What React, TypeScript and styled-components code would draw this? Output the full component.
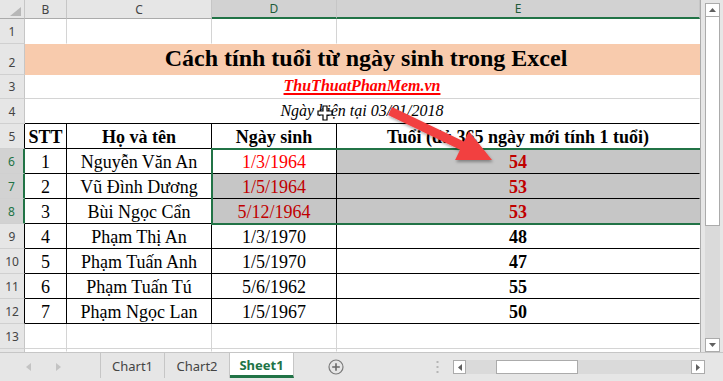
import styled, { createGlobalStyle } from "styled-components";

const GREEN = "#217346";
const GRID = "#d4d4d4";
const EDGE = "#ababab";

const GlobalStyle = createGlobalStyle`
  html, body {
    margin: 0;
    padding: 0;
    background: #fff;
    overflow: hidden;
  }
`;

const Window = styled.div`
  width: 723px;
  height: 381px;
  display: flex;
  flex-direction: column;
  background: #e6e6e6;
  overflow: hidden;
`;

const Main = styled.div`
  display: flex;
  height: 353px;
  box-sizing: border-box;
  border-bottom: 1px solid #c6c6c6;
`;

const Sheet = styled.div`
  position: relative;
  display: grid;
  grid-template-columns: 25px 42px 145px 125px 363px;
  grid-template-rows: 19px 25px 31px 24px repeat(10, 25px) 3px;
  border-right: 1px solid ${EDGE};
  background: #fff;
  overflow: hidden;
`;

const Corner = styled.div`
  display: flex;
  align-items: flex-end;
  justify-content: flex-end;
  padding: 0 3px 2px 0;
  box-sizing: border-box;
  background: #e6e6e6;
  border-right: 1px solid #c6c6c6;
  border-bottom: 1px solid ${EDGE};
`;

const ColHead = styled.div<{ $sel?: boolean }>`
  display: flex;
  align-items: center;
  justify-content: center;
  box-sizing: border-box;
  background: ${p => (p.$sel ? "#d2d2d2" : "#e6e6e6")};
  color: ${p => (p.$sel ? "#1e5b38" : "#444")};
  border-right: 1px solid #c6c6c6;
  border-bottom: ${p => (p.$sel ? `2px solid ${GREEN}` : `1px solid ${EDGE}`)};
  font: 12px "Noto Sans", "Open Sans", sans-serif;
`;

const RowHead = styled.div<{ $sel?: boolean; $edge?: boolean }>`
  display: flex;
  align-items: flex-end;
  justify-content: center;
  box-sizing: border-box;
  padding-bottom: 3px;
  background: ${p => (p.$sel ? "#d2d2d2" : "#e6e6e6")};
  color: ${p => (p.$sel ? GREEN : "#444")};
  border-right: ${p =>
    p.$sel ? `2px solid ${GREEN}` : `1px solid ${p.$edge ? "#000" : "#c6c6c6"}`};
  border-bottom: 1px solid #d0d0d0;
  font: 12px/16px "Noto Sans", "Open Sans", sans-serif;
`;

type Line = "grid" | "black" | "none";
const lineColor = (l: Line) => (l === "black" ? "#000" : l === "grid" ? GRID : "transparent");

const Cell = styled.div<{
  $span?: number;
  $bg?: string;
  $r?: Line;
  $b?: Line;
  $color?: string;
  $bold?: boolean;
  $pad?: number;
}>`
  grid-column: span ${p => p.$span ?? 1};
  display: flex;
  align-items: flex-end;
  justify-content: center;
  box-sizing: border-box;
  padding-bottom: ${p => p.$pad ?? 1}px;
  background: ${p => p.$bg ?? "#fff"};
  border-right: 1px solid ${p => lineColor(p.$r ?? "grid")};
  border-bottom: 1px solid ${p => lineColor(p.$b ?? "grid")};
  color: ${p => p.$color ?? "#000"};
  font-family: "Liberation Serif", "Times New Roman", serif;
  font-size: 18px;
  font-weight: ${p => (p.$bold ? 700 : 400)};
  line-height: 20px;
  white-space: nowrap;
`;

const Title = styled.span`
  font-size: 24px;
  line-height: 27px;
  font-weight: 700;
  margin-left: 8px;
`;

const SiteLink = styled.span`
  color: #ff0000;
  font-size: 16px;
  font-weight: 700;
  font-style: italic;
  text-decoration: underline;
  text-decoration-thickness: 2px;
  text-underline-offset: 2px;
`;

const DateNote = styled.span`
  font-size: 16px;
  font-style: italic;
`;

const Selection = styled.div`
  position: absolute;
  left: 211px;
  top: 148px;
  width: 490px;
  height: 77px;
  box-sizing: border-box;
  border: 2px solid ${GREEN};
  border-right: none;
  pointer-events: none;
`;

const CursorMark = styled.svg`
  position: absolute;
  left: 317px;
  top: 105px;
`;

const Arrow = styled.svg`
  position: absolute;
  left: 380px;
  top: 100px;
  overflow: visible;
`;

const VScroll = styled.div`
  width: 22px;
  box-sizing: border-box;
  padding: 3px 3px 0 4px;
  display: flex;
  flex-direction: column;
  background: #e6e6e6;
`;

const ScrollBtn = styled.div<{ $w?: number }>`
  height: 14px;
  width: ${p => (p.$w ? `${p.$w}px` : "auto")};
  flex: none;
  box-sizing: border-box;
  display: flex;
  align-items: center;
  justify-content: center;
  background: #fff;
  border: 1px solid ${EDGE};
`;

const VThumb = styled.div`
  height: 209px;
  background: #fff;
  border: 1px solid ${EDGE};
  border-top: none;
  box-sizing: border-box;
`;

const VTrack = styled.div`
  flex: 1;
  background: #dadada;
`;

const TabBar = styled.div`
  flex: 1;
  display: flex;
  align-items: center;
  background: #e6e6e6;
`;

const NavArrows = styled.div`
  width: 100px;
  box-sizing: border-box;
  display: flex;
  align-items: center;
  gap: 23px;
  padding-left: 26px;
`;

const Tabs = styled.div`
  align-self: flex-start;
  display: flex;
  height: 25px;
  border-left: 1px solid #c6c6c6;
`;

const Tab = styled.div<{ $w: number; $active?: boolean }>`
  width: ${p => p.$w}px;
  box-sizing: border-box;
  display: flex;
  align-items: center;
  justify-content: center;
  border-right: 1px solid #c6c6c6;
  border-bottom: ${p => (p.$active ? `3px solid ${GREEN}` : "none")};
  background: ${p => (p.$active ? "#fff" : "transparent")};
  color: ${p => (p.$active ? GREEN : "#444")};
  font: ${p => (p.$active ? 700 : 400)} 13px "Noto Sans", "Open Sans", sans-serif;
  padding-top: ${p => (p.$active ? 2 : 0)}px;
`;

const AddSheet = styled.svg`
  margin-left: 34px;
  flex: none;
`;

const Dots = styled.svg`
  margin-left: 92px;
  flex: none;
`;

const HScroll = styled.div`
  margin-left: 14px;
  width: 252px;
  height: 14px;
  display: flex;
`;

const HTrack = styled.div`
  flex: 1;
  background: #dadada;
  display: flex;
`;

const HThumb = styled.div`
  margin-left: 30px;
  width: 82px;
  background: #fff;
  border: 1px solid ${EDGE};
  box-sizing: border-box;
`;

const Tri = ({ dir, color = "#606060" }: { dir: "up" | "down" | "left" | "right"; color?: string }) => {
  const pts = {
    up: "0,4 7,4 3.5,0",
    down: "0,0 7,0 3.5,4",
    left: "4,0 4,7 0,3.5",
    right: "0,0 0,7 4,3.5",
  }[dir];
  const vertical = dir === "up" || dir === "down";
  return (
    <svg width={vertical ? 7 : 4} height={vertical ? 4 : 7}>
      <polygon points={pts} fill={color} />
    </svg>
  );
};

const people = [
  { stt: 1, name: "Nguyễn Văn An", dob: "1/3/1964", age: 54 },
  { stt: 2, name: "Vũ Đình Dương", dob: "1/5/1964", age: 53 },
  { stt: 3, name: "Bùi Ngọc Cẩn", dob: "5/12/1964", age: 53 },
  { stt: 4, name: "Phạm Thị An", dob: "1/3/1970", age: 48 },
  { stt: 5, name: "Phạm Tuấn Anh", dob: "1/5/1970", age: 47 },
  { stt: 6, name: "Phạm Tuấn Tú", dob: "5/6/1962", age: 55 },
  { stt: 7, name: "Phạm Ngọc Lan", dob: "1/5/1967", age: 50 },
];

const SEL_BG = "#c6c6c6";
const DARK_RED = "#c00000";

const App = () => {
  return (
    <Window>
      <GlobalStyle />
      <Main>
        <Sheet>
          <Corner>
            <svg width="11" height="9">
              <polygon points="11,0 11,9 0,9" fill="#b7b7b7" />
            </svg>
          </Corner>
          <ColHead>B</ColHead>
          <ColHead>C</ColHead>
          <ColHead $sel>D</ColHead>
          <ColHead $sel>E</ColHead>

          <RowHead>1</RowHead>
          <Cell $b="none" />
          <Cell $b="none" />
          <Cell $b="none" />
          <Cell $b="none" $r="none" />

          <RowHead>2</RowHead>
          <Cell $span={4} $bg="#f8cbad" $r="none" $b="none" $pad={2}>
            <Title>Cách tính tuổi từ ngày sinh trong Excel</Title>
          </Cell>

          <RowHead>3</RowHead>
          <Cell $span={4} $r="none" $pad={2}>
            <SiteLink>ThuThuatPhanMem.vn</SiteLink>
          </Cell>

          <RowHead>4</RowHead>
          <Cell $span={4} $r="none" $b="black" $pad={2}>
            <DateNote>Ngày hiện tại 03/01/2018</DateNote>
          </Cell>

          <RowHead $edge>5</RowHead>
          <Cell $r="black" $b="black" $bold>STT</Cell>
          <Cell $r="black" $b="black" $bold>Họ và tên</Cell>
          <Cell $r="black" $b="black" $bold>Ngày sinh</Cell>
          <Cell $r="none" $b="black" $bold>Tuổi (đủ 365 ngày mới tính 1 tuổi)</Cell>

          {people.map((p, i) => {
            const sel = i < 3;
            return [
              <RowHead key={`h${i}`} $sel={sel} $edge>
                {i + 6}
              </RowHead>,
              <Cell key={`a${i}`} $r="black" $b="black">
                {p.stt}
              </Cell>,
              <Cell key={`b${i}`} $r="black" $b="black">
                {p.name}
              </Cell>,
              <Cell
                key={`c${i}`}
                $r="black"
                $b="black"
                $bg={sel && i > 0 ? SEL_BG : "#fff"}
                $color={i === 0 ? "#ff0000" : sel ? DARK_RED : "#000"}
              >
                {p.dob}
              </Cell>,
              <Cell
                key={`d${i}`}
                $r="none"
                $b="black"
                $bold
                $bg={sel ? SEL_BG : "#fff"}
                $color={sel ? DARK_RED : "#000"}
              >
                {p.age}
              </Cell>,
            ];
          })}

          <RowHead>13</RowHead>
          <Cell />
          <Cell />
          <Cell />
          <Cell $r="none" />

          <RowHead />
          <Cell $b="none" />
          <Cell $b="none" />
          <Cell $b="none" />
          <Cell $b="none" $r="none" />

          <Selection />

          <CursorMark width="16" height="16" viewBox="-1 -1 16 16">
            <path
              d="M5 0 H9 V5 H14 V9 H9 V14 H5 V9 H0 V5 H5 Z"
              fill="#fff"
              stroke="#000"
              strokeWidth="1.2"
            />
          </CursorMark>

          <Arrow width="125" height="70" viewBox="0 0 125 70">
            <defs>
              <filter id="arrowShadow" x="-20%" y="-20%" width="150%" height="160%">
                <feDropShadow dx="1" dy="2" stdDeviation="1.6" floodColor="#000" floodOpacity="0.35" />
              </filter>
            </defs>
            <polygon
              points="11.95,6.95 83.95,41.55 88.9,31.2 112,60 75.1,60 80.05,49.65 8.05,15.05"
              fill="#f2403f"
              filter="url(#arrowShadow)"
            />
          </Arrow>
        </Sheet>

        <VScroll>
          <ScrollBtn>
            <Tri dir="up" />
          </ScrollBtn>
          <VThumb />
          <VTrack />
          <ScrollBtn>
            <Tri dir="down" />
          </ScrollBtn>
        </VScroll>
      </Main>

      <TabBar>
        <NavArrows>
          <svg width="6" height="8">
            <polygon points="5,0 5,8 0,4" fill="#c3c3c3" />
          </svg>
          <svg width="6" height="8">
            <polygon points="1,0 1,8 6,4" fill="#c3c3c3" />
          </svg>
        </NavArrows>
        <Tabs>
          <Tab $w={64}>Chart1</Tab>
          <Tab $w={65}>Chart2</Tab>
          <Tab $w={64} $active>
            Sheet1
          </Tab>
        </Tabs>
        <AddSheet width="16" height="16" viewBox="0 0 16 16">
          <circle cx="8" cy="8" r="7" fill="none" stroke="#7a7a7a" strokeWidth="1.2" />
          <path d="M8 4.2 V11.8 M4.2 8 H11.8" stroke="#6a6a6a" strokeWidth="1.6" />
        </AddSheet>
        <Dots width="3" height="12">
          <rect x="0.5" y="0" width="2" height="2" fill="#b5b5b5" />
          <rect x="0.5" y="5" width="2" height="2" fill="#b5b5b5" />
          <rect x="0.5" y="10" width="2" height="2" fill="#b5b5b5" />
        </Dots>
        <HScroll>
          <ScrollBtn $w={13}>
            <Tri dir="left" />
          </ScrollBtn>
          <HTrack>
            <HThumb />
          </HTrack>
          <ScrollBtn $w={14}>
            <Tri dir="right" />
          </ScrollBtn>
        </HScroll>
      </TabBar>
    </Window>
  );
};

export default App;
